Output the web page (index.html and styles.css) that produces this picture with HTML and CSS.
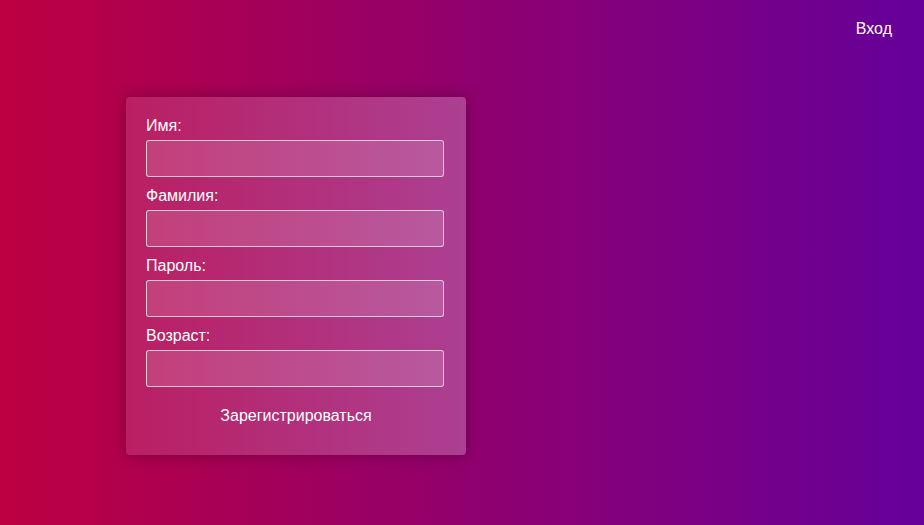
FILE: index.html
```html
<!DOCTYPE html>
<html lang="ru">
<head>
<meta charset="utf-8">
<title>Регистрация</title>
<link rel="stylesheet" href="styles.css">
</head>
<body>
<header class="topbar">
  <a class="login-link" href="#">Вход</a>
</header>
<main class="main">
  <form class="card">
    <label class="field-label" for="name">Имя:</label>
    <input class="field-input" id="name" type="text">
    <label class="field-label" for="surname">Фамилия:</label>
    <input class="field-input" id="surname" type="text">
    <label class="field-label" for="password">Пароль:</label>
    <input class="field-input" id="password" type="password">
    <label class="field-label" for="age">Возраст:</label>
    <input class="field-input" id="age" type="text">
    <button class="submit" type="button">Зарегистрироваться</button>
  </form>
</main>
</body>
</html>
```
FILE: styles.css
```css
* { box-sizing: border-box; }
html, body { height: 100%; }
body {
  margin: 0;
  font-family: "Liberation Sans", Arial, sans-serif;
  font-size: 16px;
  color: #fff;
  background: linear-gradient(to right, #bd0040, #65009a);
  overflow: hidden;
}
.topbar {
  display: flex;
  justify-content: flex-end;
  padding: 20px 32px 0 0;
  height: 38px;
}
.login-link {
  color: #fff;
  text-decoration: none;
  line-height: 18px;
}
.main {
  padding: 59px 0 0 126px;
}
.card {
  width: 340px;
  padding: 20px 22px 20px 20px;
  display: flex;
  flex-direction: column;
  background: linear-gradient(to right, rgba(255, 255, 255, 0.12), rgba(255, 255, 255, 0.25));
  border-radius: 4px;
  box-shadow: 0 0 16px rgba(40, 0, 30, 0.35);
}
.field-label {
  height: 18px;
  line-height: 18px;
  margin-bottom: 5px;
  color: #fff;
}
.field-input {
  height: 37px;
  margin: 0 0 10px 0;
  border: 1px solid rgba(225, 225, 225, 0.85);
  border-radius: 3px;
  background: rgba(255, 255, 255, 0.14);
  color: #fff;
  font: inherit;
  padding: 0 8px;
  outline: none;
}
.submit {
  align-self: center;
  margin: 0 0 0 2px;
  padding: 10px;
  background: transparent;
  border: none;
  color: #fff;
  font: inherit;
  line-height: 18px;
  cursor: pointer;
}
```
